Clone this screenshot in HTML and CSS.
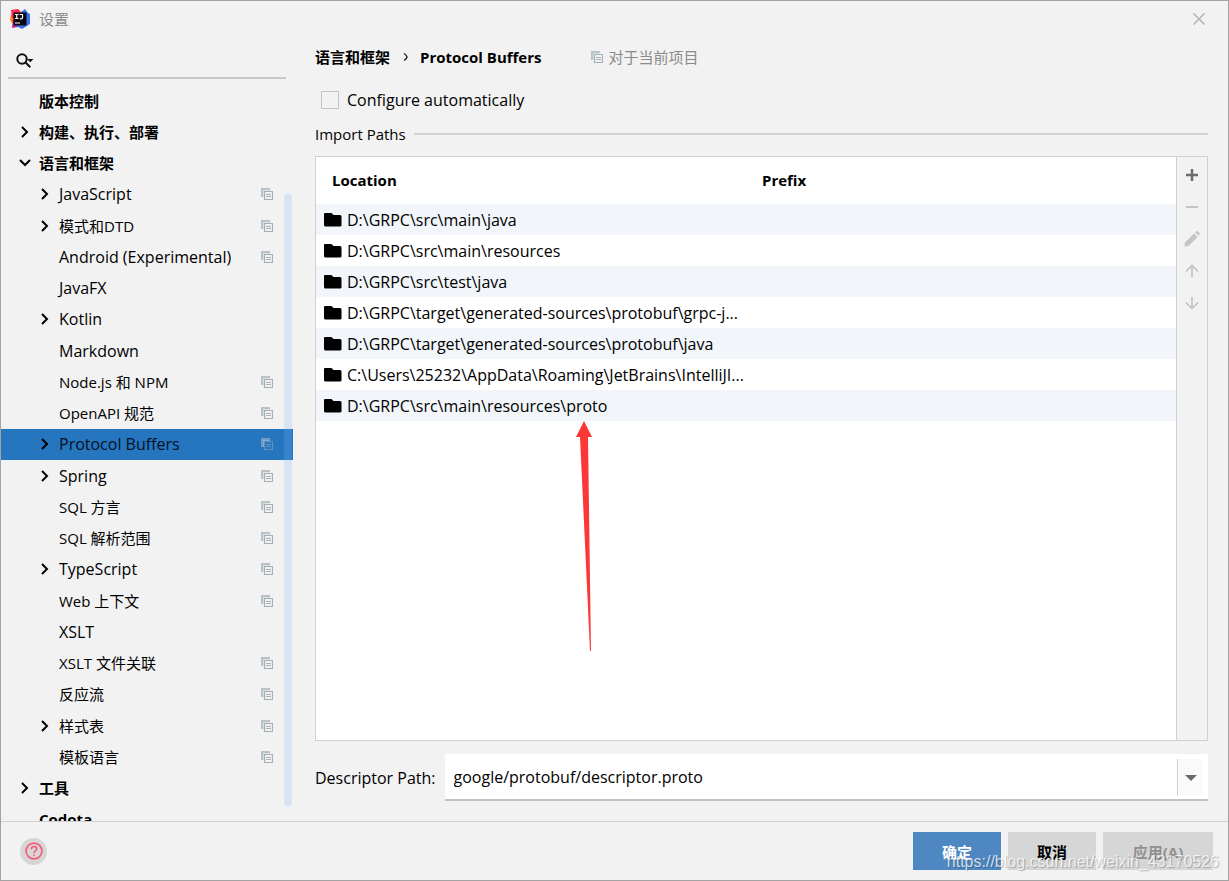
FILE: index.html
```html
<!DOCTYPE html>
<html lang="zh-CN">
<head>
<meta charset="utf-8">
<title>设置</title>
<link rel="stylesheet" href="styles.css">
</head>
<body>
<svg class="defs" aria-hidden="true">
  <symbol id="chev" viewBox="0 0 12 12"><path d="M3 1l5 5-5 5" fill="none" stroke="#000" stroke-width="2"/></symbol>
  <symbol id="chev-down" viewBox="0 0 12 12"><path d="M1 3l5 5 5-5" fill="none" stroke="#000" stroke-width="2"/></symbol>
  <symbol id="copy" viewBox="0 0 12 12"><path d="M0 0h9v2H2v7H0z" fill="#b9c2c7"/><path d="M2 2h7v1H3v6H2z" fill="#dde2e5"/><path d="M3.500 3.500h8v8h-8z" fill="none" stroke="#a3b0b7" stroke-width="1.200"/><path d="M5 6.500h5M5 8.500h5" stroke="#aab5bb"/></symbol>
  <symbol id="folder" viewBox="0 0 18 14"><path d="M1 0h6.500l2 2H16q1.500 0 1.500 1.500v9q0 1-1.500 1H1.500Q0 13.500 0 12V1q0-1 1-1z"/></symbol>
</svg>
<div class="dialog">
  <header class="titlebar">
    <svg class="logo" viewBox="0 0 20 20" aria-hidden="true">
      <path d="M1 5l4 2v8l-3-1-2-3z" fill="#fc801d"/>
      <path d="M1 1l7-1 3 3-2 5-7 1z" fill="#fe2857"/>
      <path d="M3 10l7 5-2 3-6 1z" fill="#c21fa0"/>
      <path d="M11 3l4-3 3 4 2 1v10l-8 5-6-3z" fill="#3a72ea"/>
      <path d="M3.500 3.500h13v13h-13z" fill="#0c0a10"/>
      <path d="M5 5.500h3.500M6.750 5.500v4M5 9.500h3.500M9.500 5.500h3v3.500q0 .8-1.500.8h-1.200M5 14h5" fill="none" stroke="#fff" stroke-width="1.200"/>
    </svg>
    <h1 class="title">设置</h1>
    <button class="close" aria-label="关闭"><svg viewBox="0 0 12 12"><path d="M.5.5l11 11M11.500.5l-11 11" stroke="#b4b4b4" stroke-width="1.500"/></svg></button>
  </header>
  <div class="content">
    <aside class="sidebar">
      <label class="search">
        <svg viewBox="0 0 18 16" aria-hidden="true"><circle cx="6" cy="6" r="4.700" fill="none" stroke="#111" stroke-width="2"/><path d="M9.300 9.300l5 5" stroke="#111" stroke-width="2"/><path d="M11 6h6.500l-3.200 3.200z" fill="#111"/></svg>
        <input type="text" aria-label="搜索">
      </label>
      <nav class="tree">
        <ul class="items">
          <li class="item top"><span class="arrow"></span><span class="name">版本控制</span></li>
          <li class="item top"><svg class="arrow"><use href="#chev"/></svg><span class="name">构建、执行、部署</span></li>
          <li class="item top"><svg class="arrow"><use href="#chev-down"/></svg><span class="name">语言和框架</span></li>
          <li class="item latin"><svg class="arrow"><use href="#chev"/></svg><span class="name">JavaScript</span><svg class="copy"><use href="#copy"/></svg></li>
          <li class="item"><svg class="arrow"><use href="#chev"/></svg><span class="name">模式和DTD</span><svg class="copy"><use href="#copy"/></svg></li>
          <li class="item latin"><span class="arrow"></span><span class="name">Android (Experimental)</span><svg class="copy"><use href="#copy"/></svg></li>
          <li class="item latin"><span class="arrow"></span><span class="name">JavaFX</span></li>
          <li class="item latin"><svg class="arrow"><use href="#chev"/></svg><span class="name">Kotlin</span></li>
          <li class="item latin"><span class="arrow"></span><span class="name">Markdown</span></li>
          <li class="item"><span class="arrow"></span><span class="name">Node.js 和 NPM</span><svg class="copy"><use href="#copy"/></svg></li>
          <li class="item"><span class="arrow"></span><span class="name">OpenAPI 规范</span><svg class="copy"><use href="#copy"/></svg></li>
          <li class="item latin selected"><svg class="arrow"><use href="#chev"/></svg><span class="name">Protocol Buffers</span><svg class="copy"><use href="#copy"/></svg></li>
          <li class="item latin"><svg class="arrow"><use href="#chev"/></svg><span class="name">Spring</span><svg class="copy"><use href="#copy"/></svg></li>
          <li class="item"><span class="arrow"></span><span class="name">SQL 方言</span><svg class="copy"><use href="#copy"/></svg></li>
          <li class="item"><span class="arrow"></span><span class="name">SQL 解析范围</span><svg class="copy"><use href="#copy"/></svg></li>
          <li class="item latin"><svg class="arrow"><use href="#chev"/></svg><span class="name">TypeScript</span><svg class="copy"><use href="#copy"/></svg></li>
          <li class="item"><span class="arrow"></span><span class="name">Web 上下文</span><svg class="copy"><use href="#copy"/></svg></li>
          <li class="item latin"><span class="arrow"></span><span class="name">XSLT</span></li>
          <li class="item"><span class="arrow"></span><span class="name">XSLT 文件关联</span><svg class="copy"><use href="#copy"/></svg></li>
          <li class="item"><span class="arrow"></span><span class="name">反应流</span><svg class="copy"><use href="#copy"/></svg></li>
          <li class="item"><svg class="arrow"><use href="#chev"/></svg><span class="name">样式表</span><svg class="copy"><use href="#copy"/></svg></li>
          <li class="item"><span class="arrow"></span><span class="name">模板语言</span><svg class="copy"><use href="#copy"/></svg></li>
          <li class="item top"><svg class="arrow"><use href="#chev"/></svg><span class="name">工具</span></li>
          <li class="item top"><span class="arrow"></span><span class="name">Codota</span></li>
        </ul>
        <div class="scrollbar"></div>
      </nav>
    </aside>
    <main class="main">
      <div class="crumbs">
        <span>语言和框架</span>
        <svg class="sep" viewBox="0 0 6 10" aria-hidden="true"><path d="M1 1.500q3 2 3 3.500t-3 3.500" fill="none" stroke="#222" stroke-width="1.500"/></svg>
        <span>Protocol Buffers</span>
        <span class="scope"><svg class="copy"><use href="#copy"/></svg>对于当前项目</span>
      </div>
      <label class="check"><input type="checkbox">Configure automatically</label>
      <h2 class="group">Import Paths</h2>
      <section class="panel">
        <div class="table-area">
          <table class="paths">
            <thead><tr><th>Location</th><th>Prefix</th></tr></thead>
            <tbody>
              <tr><td><div class="cell"><svg class="folder"><use href="#folder"/></svg>D:\GRPC\src\main\java</div></td><td></td></tr>
              <tr><td><div class="cell"><svg class="folder"><use href="#folder"/></svg>D:\GRPC\src\main\resources</div></td><td></td></tr>
              <tr><td><div class="cell"><svg class="folder"><use href="#folder"/></svg>D:\GRPC\src\test\java</div></td><td></td></tr>
              <tr><td><div class="cell"><svg class="folder"><use href="#folder"/></svg>D:\GRPC\target\generated-sources\protobuf\grpc-j...</div></td><td></td></tr>
              <tr><td><div class="cell"><svg class="folder"><use href="#folder"/></svg>D:\GRPC\target\generated-sources\protobuf\java</div></td><td></td></tr>
              <tr><td><div class="cell"><svg class="folder"><use href="#folder"/></svg>C:\Users\25232\AppData\Roaming\JetBrains\IntelliJI...</div></td><td></td></tr>
              <tr><td><div class="cell"><svg class="folder"><use href="#folder"/></svg>D:\GRPC\src\main\resources\proto</div></td><td></td></tr>
            </tbody>
          </table>
        </div>
        <div class="tools">
          <button aria-label="添加"><svg viewBox="0 0 16 16"><path d="M8 2v12M2 8h12" stroke="#6e6e6e" stroke-width="2.500"/></svg></button>
          <button aria-label="移除" disabled><svg viewBox="0 0 16 16"><path d="M2 8h12" stroke="#c4c4c4" stroke-width="2"/></svg></button>
          <button aria-label="编辑" disabled><svg viewBox="0 0 16 16"><path d="M.5 15.500l.5-4L10 2.500l3.500 3.500-9 9zM11 1.500l1.500-1.500q1 0 2 1t1.500 2L14.500 4.500z" fill="#c4c4c4"/></svg></button>
          <button aria-label="上移" disabled><svg viewBox="0 0 16 16"><path d="M8 14V2.500M2 8.500l6-6 6 6" fill="none" stroke="#c4c4c4" stroke-width="1.700"/></svg></button>
          <button aria-label="下移" disabled><svg viewBox="0 0 16 16"><path d="M8 2v11.500M2 7.500l6 6 6-6" fill="none" stroke="#c4c4c4" stroke-width="1.700"/></svg></button>
        </div>
      </section>
      <div class="descriptor">
        <label for="descriptor">Descriptor Path:</label>
        <div class="combo">
          <select id="descriptor"><option>google/protobuf/descriptor.proto</option></select>
          <span class="combo-arrow"><svg viewBox="0 0 12 6"><path d="M0 0h12L6 6z" fill="#6a6a6a"/></svg></span>
        </div>
      </div>
    </main>
  </div>
  <footer class="footer">
    <button class="help" aria-label="帮助"><svg viewBox="0 0 18 18"><circle cx="9" cy="9" r="7.900" fill="none" stroke="#f9587a" stroke-width="1.600"/><path d="M6.300 7.200q0-2.700 2.700-2.700t2.700 2.500q0 1.200-1.500 2.100Q9 9.900 9 11M9 12.200v1.600" fill="none" stroke="#f9587a" stroke-width="1.600"/></svg></button>
    <button class="btn primary">确定</button>
    <button class="btn">取消</button>
    <button class="btn wide" disabled>应用(A)</button>
  </footer>
  <svg class="pointer" viewBox="0 0 16 230" aria-hidden="true"><path d="M8 0l8 16h-4l3 214h-1L4 16H0z" fill="#fc3737"/></svg>
  <span class="watermark">https://blog.csdn.net/weixin_43170526</span>
</div>
</body>
</html>
```
FILE: styles.css
```css
* {
  box-sizing: border-box;
}

body {
  margin: 0;
  font: 15px/20px "Open Sans", "Noto Sans CJK SC", sans-serif;
  color: #000;
}

button {
  padding: 0;
  border: 0;
  background: none;
  font: inherit;
}

svg {
  display: block;
}

.defs {
  position: absolute;
  width: 0;
  height: 0;
}

.dialog {
  position: relative;
  display: flex;
  flex-direction: column;
  height: 100vh;
  border: 1px solid #a3a3a3;
  background: #f2f2f2;
}

.titlebar {
  display: flex;
  align-items: center;
  height: 36px;
  padding: 0 23px 0 9px;
}

.logo {
  width: 20px;
  height: 20px;
}

.title {
  flex: 1;
  margin: 0 0 0 9px;
  font-size: 15px;
  font-weight: 400;
  color: #8c8c8c;
}

.close svg {
  width: 12px;
  height: 12px;
}

.content {
  flex: 1;
  display: flex;
  min-height: 0;
}

.sidebar {
  display: flex;
  flex-direction: column;
  width: 292px;
}

.search {
  display: flex;
  align-items: center;
  gap: 4px;
  height: 42px;
  margin: 0 7px 6px;
  padding: 8px 0 0 8px;
  border-bottom: 2px solid #c8c8c8;
}

.search svg {
  width: 18px;
  height: 16px;
}

.search input {
  flex: 1;
  min-width: 0;
  border: 0;
  outline: 0;
  background: none;
  font: inherit;
}

.tree {
  position: relative;
  flex: 1;
  min-height: 0;
  overflow: hidden;
}

.items {
  display: flex;
  flex-direction: column;
  height: calc(100% + 14px);
  margin: 0;
  padding: 0;
  list-style: none;
}

.item {
  flex: 1;
  display: flex;
  align-items: center;
  gap: 8px;
  min-height: 0;
  padding: 0 20px 0 38px;
}

.item.top {
  padding-left: 18px;
  font-weight: 700;
}

.item.latin {
  font-size: 16px;
}

.item .name {
  flex: 1;
  white-space: nowrap;
}

.item.selected {
  background: #2675bf;
  color: #04121f;
}

.arrow {
  width: 12px;
  height: 12px;
}

.copy {
  width: 12px;
  height: 12px;
}

.selected .copy {
  opacity: 0.5;
}

.scrollbar {
  position: absolute;
  top: 109px;
  right: 1px;
  bottom: 15px;
  width: 8px;
  border-radius: 4px;
  background: rgba(120, 180, 240, 0.22);
}

.main {
  flex: 1;
  display: flex;
  flex-direction: column;
  min-width: 0;
  padding: 10px 20px 20px 22px;
}

.crumbs {
  display: flex;
  align-items: center;
  font-weight: 700;
}

.sep {
  width: 6px;
  height: 10px;
  margin: 0 11px 0 13px;
}

.scope {
  display: flex;
  align-items: center;
  gap: 5px;
  margin-left: 50px;
  font-weight: 400;
  color: #8a8a8a;
}

.check {
  display: flex;
  align-items: center;
  align-self: flex-start;
  gap: 8px;
  margin: 23px 0 14px 6px;
  font-size: 16px;
}

.check input {
  appearance: none;
  width: 18px;
  height: 18px;
  margin: 0;
  border: 1px solid #c4c4c4;
  background: #f2f2f2;
}

.group {
  display: flex;
  align-items: center;
  gap: 8px;
  margin: 0 0 12px;
  font-size: 15px;
  font-weight: 400;
}

.group::after {
  content: "";
  flex: 1;
  height: 2px;
  background: #d1d1d1;
}

.panel {
  flex: 1;
  display: flex;
  min-height: 0;
  border: 1px solid #d0d0d0;
}

.table-area {
  flex: 1;
  min-width: 0;
  background: #fff;
}

.paths {
  width: 100%;
  table-layout: fixed;
  border-collapse: collapse;
}

.paths th {
  height: 47px;
  padding: 0 16px 2px;
  text-align: left;
}

.paths td {
  height: 31px;
  padding: 0 0 0 8px;
  font-size: 16px;
  white-space: nowrap;
}

.paths tbody tr:nth-child(odd) {
  background: #f2f5fa;
}

.cell {
  display: flex;
  align-items: center;
  gap: 5px;
}

.folder {
  width: 18px;
  height: 14px;
}

.tools {
  display: flex;
  flex-direction: column;
  align-items: center;
  gap: 16px;
  width: 31px;
  padding-top: 10px;
  border-left: 1px solid #d0d0d0;
}

.tools svg {
  width: 16px;
  height: 16px;
}

.descriptor {
  display: flex;
  align-items: center;
  gap: 9px;
  margin-top: 13px;
  font-size: 16px;
}

.combo {
  position: relative;
  flex: 1;
}

.combo select {
  appearance: none;
  display: block;
  width: 100%;
  height: 47px;
  padding: 0 40px 0 9px;
  border: 0;
  border-bottom: 2px solid #c2c2c2;
  border-radius: 0;
  background: #fff;
  font: inherit;
  color: #000;
}

.combo-arrow {
  position: absolute;
  top: 5px;
  right: 5px;
  bottom: 5px;
  display: flex;
  align-items: center;
  width: 26px;
  padding-left: 7px;
  border-left: 1px solid #d0d0d0;
  background: #fafafa;
  pointer-events: none;
}

.combo-arrow svg {
  width: 12px;
  height: 6px;
}

.footer {
  display: flex;
  align-items: center;
  gap: 7px;
  height: 59px;
  padding: 0 15px 0 19px;
  border-top: 1px solid #d0d0d0;
}

.help {
  display: grid;
  place-items: center;
  width: 27px;
  height: 27px;
  margin-right: auto;
  border-radius: 50%;
  background: #d6d6d6;
}

.help svg {
  width: 18px;
  height: 18px;
}

.btn {
  width: 88px;
  height: 38px;
  padding-top: 2px;
  background: #d6d6d6;
  font-weight: 700;
  color: #000;
}

.btn.primary {
  background: #4e87c1;
  color: #fff;
}

.btn.wide {
  width: 110px;
  color: #909090;
}

.pointer {
  position: absolute;
  top: 420px;
  left: 575px;
  width: 16px;
  height: 230px;
}

.watermark {
  position: absolute;
  right: 9px;
  bottom: 8px;
  font: 16px/20px "Liberation Sans", sans-serif;
  color: rgba(255, 255, 255, 0.75);
  text-shadow: 1px 1px 1px rgba(0, 0, 0, 0.25);
  pointer-events: none;
}
```
